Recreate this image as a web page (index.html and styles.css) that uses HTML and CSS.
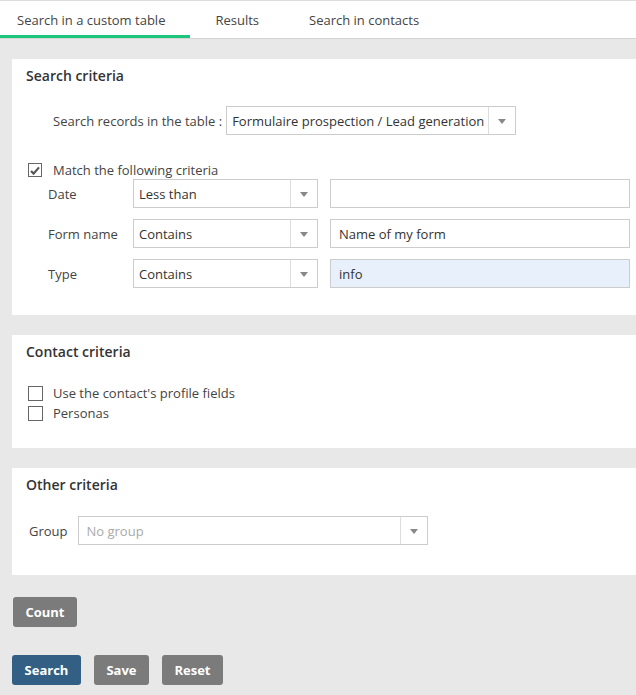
FILE: index.html
```html
<!DOCTYPE html>
<html lang="en">

<head>
  <meta charset="UTF-8" />
  <title>Search in a custom table</title>
  <link rel="stylesheet" href="styles.css">
</head>

<body>

  <div class="tabs">
    <div class="tab active">Search in a custom table</div>
    <div class="tab">Results</div>
    <div class="tab">Search in contacts</div>
  </div>

  <div class="page">

    <div class="panel">
      <h2>Search criteria</h2>

      <div class="table-row">
        <label>Search records in the table :</label>
        <div class="select table-select">
          <span class="value">Formulaire prospection / Lead generation</span>
          <span class="arrow"></span>
        </div>
      </div>

      <div class="check-line first">
        <span class="checkbox checked">
          <svg width="10" height="9" viewBox="0 0 10 9"><path d="M1 5 L3.6 7.6 L9 1.4" fill="none" stroke="#555" stroke-width="2.2"/></svg>
        </span>
        <span>Match the following criteria</span>
      </div>

      <div class="criteria">
        <div class="crit-row">
          <label>Date</label>
          <div class="select op-select"><span class="value">Less than</span><span class="arrow"></span></div>
          <input type="text" class="crit-input" value="">
        </div>
        <div class="crit-row">
          <label>Form name</label>
          <div class="select op-select"><span class="value">Contains</span><span class="arrow"></span></div>
          <input type="text" class="crit-input" value="Name of my form">
        </div>
        <div class="crit-row">
          <label>Type</label>
          <div class="select op-select"><span class="value">Contains</span><span class="arrow"></span></div>
          <input type="text" class="crit-input focused" value="info">
        </div>
      </div>
    </div>

    <div class="panel contact">
      <h2>Contact criteria</h2>
      <div class="check-list">
        <div class="check-line"><span class="checkbox"></span><span>Use the contact's profile fields</span></div>
        <div class="check-line"><span class="checkbox"></span><span>Personas</span></div>
      </div>
    </div>

    <div class="panel other">
      <h2>Other criteria</h2>
      <div class="group-row">
        <label>Group</label>
        <div class="select group-select"><span class="value placeholder">No group</span><span class="arrow"></span></div>
      </div>
    </div>

    <div class="count-row">
      <button class="btn count">Count</button>
    </div>

    <div class="actions">
      <button class="btn primary search">Search</button>
      <button class="btn save">Save</button>
      <button class="btn reset">Reset</button>
    </div>

  </div>

</body>

</html>
```

FILE: styles.css
```css
body {
  margin: 0;
  font-family: 'Open Sans', sans-serif;
  font-size: 13px;
  color: #444;
  background: #e8e8e8;
  overflow: hidden;
}

.tabs {
  display: flex;
  background: #fff;
  border-top: 1px solid #ddd;
  border-bottom: 1px solid #d4d4d4;
}

.tab {
  padding: 4px 25px 0;
  line-height: 30px;
  border-bottom: 3px solid transparent;
  color: #444;
}

.tab:first-child {
  padding-left: 17px;
}

.tab.active {
  border-bottom-color: #1dc47b;
}

.page {
  padding: 20px 0 0 12px;
}

.panel {
  background: #fff;
  padding: 7px 0 27px 14px;
  margin-bottom: 20px;
}

.panel h2 {
  margin: 0;
  font-size: 14px;
  font-weight: 600;
  line-height: 20px;
  color: #333;
}

.table-row {
  display: flex;
  align-items: center;
  gap: 4px;
  margin: 20px 0 0 27px;
}

.select {
  display: flex;
  align-items: stretch;
  height: 27px;
  border: 1px solid #ccc;
  background: #fff;
  box-sizing: content-box;
}

.select .value {
  flex: 1;
  padding: 1px 0 0 5px;
  line-height: 26px;
  color: #333;
  white-space: nowrap;
  overflow: hidden;
}

.select .value.placeholder {
  color: #aaa;
  padding-left: 8px;
}

.select .arrow {
  width: 26px;
  border-left: 1px solid #ddd;
  position: relative;
}

.select .arrow::after {
  content: "";
  position: absolute;
  left: 9px;
  top: 12px;
  border-left: 4px solid transparent;
  border-right: 4px solid transparent;
  border-top: 5px solid #888;
}

.table-select {
  width: 288px;
}

.check-line {
  display: flex;
  align-items: center;
  gap: 11px;
  line-height: 20px;
  margin-left: 2px;
}

.check-line.first {
  margin-top: 25px;
}

.checkbox {
  width: 12px;
  height: 12px;
  border: 1px solid #666;
  display: flex;
  align-items: center;
  justify-content: center;
}

.criteria {
  display: flex;
  flex-direction: column;
  gap: 11px;
  margin-top: -1px;
}

.crit-row {
  display: flex;
  align-items: center;
  margin-left: 22px;
}

.crit-row label {
  width: 85px;
}

.op-select {
  width: 183px;
}

.crit-input {
  width: 282px;
  height: 27px;
  margin-left: 12px;
  padding: 0 8px;
  border: 1px solid #ccc;
  font-family: inherit;
  font-size: 13px;
  color: #333;
  box-sizing: content-box;
  outline: none;
}

.crit-input.focused {
  background: #e8f0fc;
}

.contact {
  padding-bottom: 25px;
}

.check-list {
  margin-top: 21px;
}

.check-list .check-line {
  gap: 10px;
}

.check-list .checkbox {
  width: 13px;
  height: 13px;
}

.other {
  padding-bottom: 30px;
}

.group-row {
  display: flex;
  align-items: center;
  gap: 10px;
  margin: 21px 0 0 3px;
}

.group-select {
  width: 348px;
}

.btn {
  font-family: inherit;
  font-size: 13px;
  font-weight: 700;
  color: #fff;
  background: #7b7b7b;
  border: none;
  border-radius: 3px;
  height: 30px;
  padding: 0;
  cursor: pointer;
}

.btn.primary {
  background: #335f85;
}

.btn.count {
  width: 64px;
}

.btn.search {
  width: 69px;
}

.btn.save {
  width: 55px;
}

.btn.reset {
  width: 61px;
}

.count-row {
  margin: 22px 0 0 1px;
}

.actions {
  display: flex;
  gap: 13px;
  margin-top: 28px;
}
```
